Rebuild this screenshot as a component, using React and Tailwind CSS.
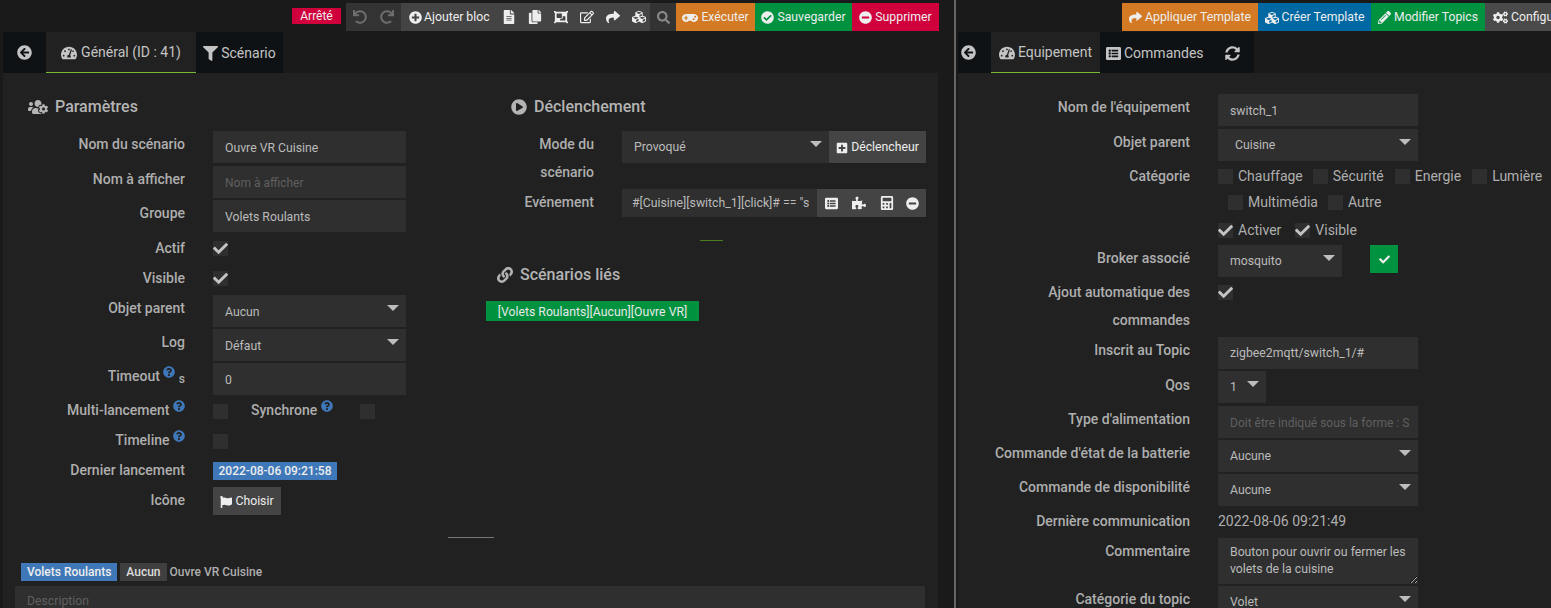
import React from 'react';
import {
  FaArrowCircleLeft, FaTachometerAlt, FaFilter, FaUsersCog, FaPlayCircle, FaLink, FaPlusCircle,
  FaFileAlt, FaCopy, FaObjectGroup, FaRegEdit, FaShare, FaCubes, FaSearch, FaGamepad, FaCheckCircle,
  FaMinusCircle, FaPencilAlt, FaCogs, FaListAlt, FaSyncAlt, FaPuzzlePiece, FaCalculator, FaPlusSquare,
  FaFlag, FaQuestionCircle, FaCheck, FaUndo, FaRedo,
} from 'react-icons/fa';

function Caret() {
  return (
    <svg className="absolute right-[7px] top-[10px]" width="12" height="6" viewBox="0 0 12 6">
      <path d="M0 0h12L6 6z" fill="#bdbdbd" />
    </svg>
  );
}

function Select({ value, className = 'w-full' }) {
  return (
    <div className={`relative h-[32px] bg-[#2f2f2f] pl-[12px] text-[12.25px] leading-[32px] text-[#bbbbbb] ${className}`}>
      {value}
      <Caret />
    </div>
  );
}

function Input({ value, placeholder, className = 'pt-[2px]' }) {
  return (
    <input
      readOnly
      value={value || ''}
      placeholder={placeholder}
      className={`block h-[32px] w-full bg-[#2f2f2f] pl-[12px] pr-[8px] text-[12.25px] text-[#bbbbbb] outline-none placeholder:text-[12px] placeholder:text-[#5f5f5f] ${className}`}
    />
  );
}

function Box({ checked }) {
  return (
    <span className="relative block h-[15px] w-[15px] shrink-0 bg-[#2f2f2f]">
      {checked && <FaCheck className="absolute left-0 top-0 text-[15px] text-[#c4c4c4]" />}
    </span>
  );
}

function Help() {
  return <FaQuestionCircle className="relative -top-[5px] inline-block text-[12px] text-[#3f78b8]" />;
}

function Row({ label, height, labelWidth, labelClass = 'pt-[3px]', children }) {
  return (
    <div className={`flex ${height}`}>
      <div className={`${labelWidth} shrink-0 text-right text-[14px] font-medium leading-[20px] text-[#aeaeae] ${labelClass}`}>{label}</div>
      <div className="ml-[28px] min-w-0 flex-1">{children}</div>
    </div>
  );
}

function ToolBtn({ className, icon, text }) {
  return (
    <div className={`flex h-[28px] items-center gap-[3px] whitespace-nowrap pt-[1px] text-[12.25px] text-[#eeeeee] ${className}`}>
      {icon}
      {text && <span>{text}</span>}
    </div>
  );
}

function Heading({ icon, text, className }) {
  return (
    <div className={`flex h-[22px] items-center text-[16px] font-medium text-[#b4b4b4] ${className}`}>
      {icon}
      <span>{text}</span>
    </div>
  );
}

function Check({ label, checked, className = '' }) {
  return (
    <span className={`flex items-center gap-[5px] whitespace-nowrap text-[14px] text-[#aeaeae] ${className}`}>
      <Box checked={checked} />
      {label}
    </span>
  );
}

function LeftForm() {
  const lw = 'w-[182px]';
  return (
    <div className="w-[470px] shrink-0 pt-[23px]">
      <Heading className="pl-[25px]" text="Paramètres" icon={<FaUsersCog className="mr-[7px] text-[20px]" />} />
      <div className="mt-[13px]">
        <Row label="Nom du scénario" labelWidth={lw} height="h-[35px]"><div className="w-[193px]"><Input value="Ouvre VR Cuisine" /></div></Row>
        <Row label="Nom à afficher" labelWidth={lw} height="h-[34px]"><div className="w-[193px]"><Input placeholder="Nom à afficher" /></div></Row>
        <Row label="Groupe" labelWidth={lw} height="h-[34px]"><div className="w-[193px]"><Input value="Volets Roulants" /></div></Row>
        <Row label="Actif" labelWidth={lw} labelClass="pt-[4px]" height="h-[30px]"><div className="pt-[7px]"><Box checked /></div></Row>
        <Row label="Visible" labelWidth={lw} labelClass="pt-[4px]" height="h-[31px]"><div className="pt-[7px]"><Box checked /></div></Row>
        <Row label="Objet parent" labelWidth={lw} height="h-[34px]"><Select value="Aucun" className="w-[193px] leading-[34px]" /></Row>
        <Row label="Log" labelWidth={lw} height="h-[34px]"><Select value="Défaut" className="w-[193px] leading-[34px]" /></Row>
        <Row
          label={<>Timeout <Help /> <span className="relative top-[2px] text-[12px]">s</span></>}
          labelWidth={lw}
          height="h-[34px]"
        >
          <div className="w-[193px]"><Input value="0" /></div>
        </Row>
        <Row label={<>Multi-lancement <Help /></>} labelWidth={lw} height="h-[30px]">
          <div className="flex items-start pt-[7px]">
            <Box />
            <span className="relative -top-[4px] ml-[23px] w-[109px] text-[14px] font-medium leading-[20px] text-[#aeaeae]">
              Synchrone <Help />
            </span>
            <Box />
          </div>
        </Row>
        <Row label={<>Timeline <Help /></>} labelWidth={lw} height="h-[30px]"><div className="pt-[7px]"><Box /></div></Row>
        <Row label="Dernier lancement" labelWidth={lw} height="h-[30px]">
          <div className="mt-[5px] h-[18px] w-[124px] bg-[#3f78b8] text-center text-[12px] font-medium leading-[18px] text-[#eeeeee]">2022-08-06 09:21:58</div>
        </Row>
        <Row label="Icône" labelWidth={lw} height="h-[28px]">
          <div className="flex h-[28px] w-[68px] items-center justify-center gap-[3px] bg-[#444444] pt-[1px] text-[12.25px] text-[#eeeeee]">
            <FaFlag className="text-[12px]" /> Choisir
          </div>
        </Row>
      </div>
    </div>
  );
}

function RightForm() {
  const lw = 'w-[121px]';
  return (
    <div className="flex-1 pt-[23px]">
      <Heading className="pl-[38px]" text="Déclenchement" icon={<FaPlayCircle className="mr-[7px] text-[16px]" />} />
      <div className="mt-[13px]">
        <Row label={<>Mode du<br />scénario</>} labelWidth={lw} labelClass="-mt-[1px] !leading-[28px]" height="h-[58px]">
          <div className="flex w-[304px]">
            <Select value="Provoqué" className="w-[207px]" />
            <ToolBtn className="h-[32px] w-[97px] justify-center bg-[#444444]" text="Déclencheur" icon={<FaPlusSquare className="text-[12px]" />} />
          </div>
        </Row>
        <Row label="Evénement" labelWidth={lw} height="h-[28px]">
          <div className="flex h-[28px] w-[304px]">
            <div className="w-[195px] overflow-hidden whitespace-nowrap bg-[#2f2f2f] px-[10px] text-[12.25px] leading-[28px] text-[#bbbbbb]">
              #[Cuisine][switch_1][click]# == "s
            </div>
            <div className="flex flex-1 items-center gap-[14px] bg-[#444444] pl-[8px] text-[#eeeeee]">
              <FaListAlt className="text-[13px]" />
              <FaPuzzlePiece className="text-[14px]" />
              <FaCalculator className="text-[14px]" />
              <FaMinusCircle className="-ml-[2px] text-[13px]" />
            </div>
          </div>
        </Row>
      </div>
      <div className="ml-[227px] mt-[23px] h-px w-[23px] bg-[#4d7a1e]" />
      <Heading className="mt-[23px] pl-[24px]" text="Scénarios liés" icon={<FaLink className="mr-[7px] text-[16px]" />} />
      <div className="ml-[13px] mt-[15px] h-[20px] w-[213px] bg-[#00923f] pt-[1px] text-center text-[12.25px] leading-[20px] text-[#e8e8e8]">
        [Volets Roulants][Aucun][Ouvre VR]
      </div>
    </div>
  );
}

function LeftPane() {
  return (
    <div className="flex h-full w-[954px] shrink-0 flex-col">
      <div className="flex h-[32px] shrink-0 justify-end pr-[15px] pt-[3px]">
        <div className="mr-[5px] mt-[5px] h-[16px] w-[49px] bg-[#d0003c] text-center text-[12px] leading-[16px] text-[#eeeeee]">Arrêté</div>
        <div className="flex h-[28px] w-[55px] items-center gap-[13px] bg-[#333333] pl-[7px] text-[14px] text-[#6e6e6e]">
          <FaUndo /><FaRedo />
        </div>
        <div className="flex h-[28px] w-[249px] items-center overflow-hidden whitespace-nowrap bg-[#444444] pl-[8px] text-[12.25px] text-[#eeeeee]">
          <FaPlusCircle className="mr-[2px] shrink-0 text-[13px]" />
          <span className="mr-[12px] shrink-0 pt-[1px]">Ajouter bloc</span>
          <span className="flex shrink-0 items-center gap-[12px] text-[14px]">
            <FaFileAlt /><FaCopy /><FaObjectGroup /><FaRegEdit /><FaShare /><FaCubes />
          </span>
        </div>
        <div className="flex h-[28px] w-[26px] items-center justify-center bg-[#333333] text-[13px] text-[#8a8a8a]"><FaSearch /></div>
        <ToolBtn className="w-[79px] justify-center bg-[#d47a24]" text="Exécuter" icon={<FaGamepad className="text-[16px]" />} />
        <ToolBtn className="w-[97px] justify-center bg-[#00923f]" text="Sauvegarder" icon={<FaCheckCircle className="text-[13px]" />} />
        <ToolBtn className="w-[87px] justify-center bg-[#d0003c]" text="Supprimer" icon={<FaMinusCircle className="text-[13px]" />} />
      </div>
      <div className="flex h-[41px] shrink-0 pl-[3px] text-[14px] text-[#c4c4c4]">
        <div className="flex w-[43px] items-center justify-center bg-[#0f1214] text-[15px]"><FaArrowCircleLeft /></div>
        <div className="flex w-[150px] items-center justify-center gap-[4px] border-b border-[#7ab835] bg-[#212121] pt-[1px]"><FaTachometerAlt className="text-[16px]" />Général (ID : 41)</div>
        <div className="flex w-[87px] items-center justify-center gap-[3px] bg-[#0f1214] pt-[1px]"><FaFilter className="text-[15px]" />Scénario</div>
      </div>
      <div className="ml-[3px] w-[935px] flex-1 overflow-hidden bg-[#212121]">
        <div className="flex h-[442px]">
          <LeftForm />
          <RightForm />
        </div>
        <div className="mx-auto mt-[22px] h-px w-[46px] bg-[#777777]" />
        <div className="ml-[18px] mt-[25px] flex h-[18px] items-center text-[12px] font-medium">
          <span className="h-[18px] bg-[#3f78b8] px-[6px] leading-[18px] text-[#eeeeee]">Volets Roulants</span>
          <span className="ml-[3px] h-[18px] bg-[#3f3f3f] px-[6px] leading-[18px] text-[#dddddd]">Aucun</span>
          <span className="ml-[3px] text-[#aeaeae]">Ouvre VR Cuisine</span>
        </div>
        <div className="ml-[12px] mt-[5px] h-[40px] w-[910px] bg-[#2f2f2f] px-[12px] pt-[6px] text-[12.25px] text-[#5f5f5f]">Description</div>
      </div>
    </div>
  );
}

function RightPane() {
  const lw = 'w-[232px]';
  return (
    <div className="flex h-full min-w-0 flex-1 flex-col overflow-hidden">
      <div className="flex h-[32px] shrink-0 pl-[166px] pt-[3px]">
        <ToolBtn className="w-[136px] shrink-0 justify-center bg-[#d47a24]" text="Appliquer Template" icon={<FaShare className="text-[13px]" />} />
        <ToolBtn className="w-[113px] shrink-0 justify-center bg-[#0068a3]" text="Créer Template" icon={<FaCubes className="text-[14px]" />} />
        <ToolBtn className="w-[114px] shrink-0 justify-center bg-[#00923f]" text="Modifier Topics" icon={<FaPencilAlt className="text-[13px]" />} />
        <ToolBtn className="w-[100px] shrink-0 bg-[#4a4a4a] pl-[8px]" text="Configuration" icon={<FaCogs className="text-[15px]" />} />
      </div>
      <div className="flex h-[41px] shrink-0 pl-[2px] text-[14px] text-[#c4c4c4]">
        <div className="flex w-[33px] items-center bg-[#0f1214] pl-[3px] text-[15px]"><FaArrowCircleLeft /></div>
        <div className="flex w-[109px] items-center justify-center gap-[3px] border-b border-[#7ab835] bg-[#212121] pt-[1px]"><FaTachometerAlt className="text-[16px]" />Equipement</div>
        <div className="flex w-[154px] items-center bg-[#0f1214] pl-[6px] pt-[1px]">
          <FaListAlt className="mr-[3px] text-[15px]" />Commandes
          <FaSyncAlt className="ml-[21px] text-[15px]" />
        </div>
      </div>
      <div className="ml-[2px] flex-1 overflow-hidden bg-[#212121] pt-[21px]">
        <Row label="Nom de l'équipement" labelWidth={lw} height="h-[35px]"><div className="w-[200px]"><Input value="switch_1" /></div></Row>
        <Row label="Objet parent" labelWidth={lw} height="h-[34px]"><Select value="Cuisine" className="w-[200px] pl-[17px]" /></Row>
        <Row label="Catégorie" labelWidth={lw} height="h-[26px]">
          <div className="flex h-[26px] items-center">
            <Check label="Chauffage" className="mr-[10px]" />
            <Check label="Sécurité" className="mr-[11px]" />
            <Check label="Energie" className="mr-[11px]" />
            <Check label="Lumière" />
          </div>
        </Row>
        <Row label="" labelWidth={lw} height="h-[28px]">
          <div className="flex h-[26px] items-center pl-[10px]">
            <Check label="Multimédia" className="mr-[10px]" />
            <Check label="Autre" />
          </div>
        </Row>
        <Row label="" labelWidth={lw} height="h-[28px]">
          <div className="flex h-[26px] items-center">
            <Check label="Activer" checked className="mr-[14px]" />
            <Check label="Visible" checked />
          </div>
        </Row>
        <Row label="Broker associé" labelWidth={lw} height="h-[39px]">
          <div className="flex">
            <Select value="mosquito" className="w-[124px] leading-[30px]" />
            <div className="ml-[28px] flex h-[28px] w-[28px] items-center justify-center bg-[#00923f] text-[11px] text-[#eeeeee]"><FaCheck /></div>
          </div>
        </Row>
        <Row label={<>Ajout automatique des<br />commandes</>} labelWidth={lw} labelClass="-mt-[6px] !leading-[28px]" height="h-[53px]">
          <div className="pt-[1px]"><Box checked /></div>
        </Row>
        <Row label="Inscrit au Topic" labelWidth={lw} height="h-[34px]"><div className="w-[200px]"><Input value="zigbee2mqtt/switch_1/#" className="" /></div></Row>
        <Row label="Qos" labelWidth={lw} labelClass="pt-[4px]" height="h-[35px]"><Select value="1" className="w-[48px]" /></Row>
        <Row label="Type d'alimentation" labelWidth={lw} height="h-[34px]"><div className="w-[200px]"><Input placeholder="Doit être indiqué sous la forme : S" /></div></Row>
        <Row label="Commande d'état de la batterie" labelWidth={lw} height="h-[34px]"><Select value="Aucune" className="w-[200px]" /></Row>
        <Row label="Commande de disponibilité" labelWidth={lw} height="h-[34px]"><Select value="Aucune" className="w-[200px]" /></Row>
        <Row label="Dernière communication" labelWidth={lw} height="h-[30px]">
          <div className="pt-[3px] text-[14px] leading-[20px] text-[#aeaeae]">2022-08-06 09:21:49</div>
        </Row>
        <Row label="Commentaire" labelWidth={lw} height="h-[48px]">
          <textarea
            readOnly
            value={'Bouton pour ouvrir ou fermer les volets de la cuisine'}
            className="block h-[46px] w-[200px] bg-[#2f2f2f] px-[12px] py-[6px] text-[12.25px] leading-[17px] text-[#bbbbbb] outline-none"
          />
        </Row>
        <Row label="Catégorie du topic" labelWidth={lw} height="h-[34px]"><Select value="Volet" className="w-[200px]" /></Row>
      </div>
    </div>
  );
}

export default function App() {
  return (
    <div className="flex h-[608px] w-[1551px] overflow-hidden bg-[#1a1a1a] font-['Roboto',sans-serif]">
      <LeftPane />
      <div className="h-full w-[2px] shrink-0 bg-[#666666]" />
      <RightPane />
    </div>
  );
}
